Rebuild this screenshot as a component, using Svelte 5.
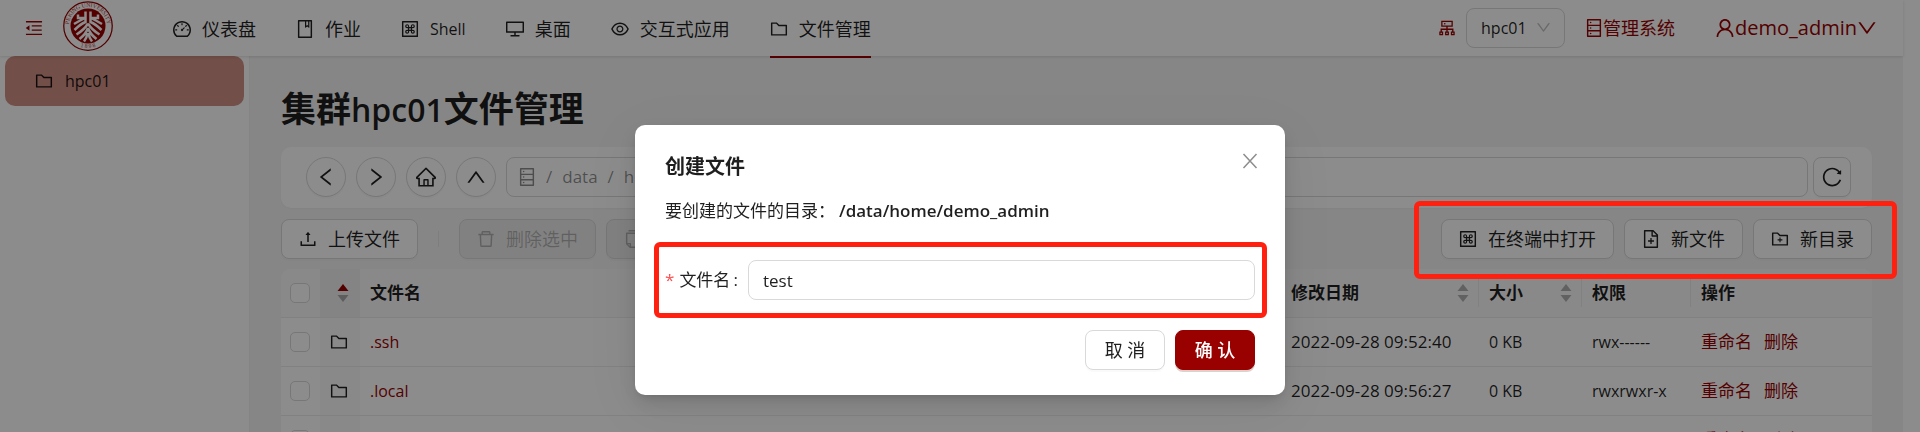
<script>
  const paths = {
    menuFold: 'M408 442h480c4.4 0 8-3.6 8-8v-56c0-4.4-3.6-8-8-8H408c-4.4 0-8 3.6-8 8v56c0 4.4 3.6 8 8 8zm-8 204c0 4.4 3.6 8 8 8h480c4.4 0 8-3.6 8-8v-56c0-4.4-3.6-8-8-8H408c-4.4 0-8 3.6-8 8v56zm504-486H120c-4.4 0-8 3.6-8 8v56c0 4.4 3.6 8 8 8h784c4.4 0 8-3.6 8-8v-56c0-4.4-3.6-8-8-8zm0 632H120c-4.4 0-8 3.6-8 8v56c0 4.4 3.6 8 8 8h784c4.4 0 8-3.6 8-8v-56c0-4.4-3.6-8-8-8zM115.4 518.9L271.7 642c5.8 4.6 14.4.5 14.4-6.9V388.9c0-7.4-8.5-11.5-14.4-6.9L115.4 505.1a8.74 8.74 0 000 13.8z',
    dashboard: 'M924.8 385.6a446.7 446.7 0 00-96-142.4 446.7 446.7 0 00-142.4-96C631.1 123.8 572.5 112 512 112s-119.1 11.8-174.4 35.2a446.7 446.7 0 00-142.4 96 446.7 446.7 0 00-96 142.4C75.8 440.9 64 499.5 64 560c0 132.7 58.3 257.7 159.9 343.1l1.7 1.4c5.8 4.8 13.1 7.5 20.6 7.5h531.7c7.5 0 14.8-2.7 20.6-7.5l1.7-1.4C901.7 817.7 960 692.7 960 560c0-60.5-11.9-119.1-35.2-174.4zM761.4 836H262.6A371.12 371.12 0 01140 560c0-99.4 38.7-192.8 109-263 70.3-70.3 163.7-109 263-109 99.4 0 192.8 38.7 263 109 70.3 70.3 109 163.7 109 263 0 105.6-44.5 205.5-122.6 276zM623.5 421.5a8.03 8.03 0 00-11.3 0L527.7 506c-18.7-5-39.4-.2-54.1 14.5a55.95 55.95 0 000 79.2 55.95 55.95 0 0079.2 0 55.87 55.87 0 0014.5-54.1l84.5-84.5c3.1-3.1 3.1-8.2 0-11.3l-28.3-28.3zM490 320h44c4.4 0 8-3.6 8-8v-80c0-4.4-3.6-8-8-8h-44c-4.4 0-8 3.6-8 8v80c0 4.4 3.6 8 8 8zm260 218v44c0 4.4 3.6 8 8 8h80c4.4 0 8-3.6 8-8v-44c0-4.4-3.6-8-8-8h-80c-4.4 0-8 3.6-8 8zm12.7-197.2l-31.1-31.1a8.03 8.03 0 00-11.3 0l-56.6 56.6a8.03 8.03 0 000 11.3l31.1 31.1c3.1 3.1 8.2 3.1 11.3 0l56.6-56.6c3.1-3.1 3.1-8.2 0-11.3zm-458.6-31.1a8.03 8.03 0 00-11.3 0l-31.1 31.1a8.03 8.03 0 000 11.3l56.6 56.6c3.1 3.1 8.2 3.1 11.3 0l31.1-31.1c3.1-3.1 3.1-8.2 0-11.3l-56.6-56.6zM262 530h-80c-4.4 0-8 3.6-8 8v44c0 4.4 3.6 8 8 8h80c4.4 0 8-3.6 8-8v-44c0-4.4-3.6-8-8-8z',
    book: 'M832 64H192c-17.7 0-32 14.3-32 32v832c0 17.7 14.3 32 32 32h640c17.7 0 32-14.3 32-32V96c0-17.7-14.3-32-32-32zm-260 72h96v209.9L621.5 312 572 347.4V136zm220 752H232V136h280v296.9c0 3.3 1 6.6 3 9.3a15.9 15.9 0 0022.3 3.7l83.8-59.9 81.4 59.4c2.7 2 6 3.1 9.4 3.1 8.8 0 16-7.2 16-16V136h64v752z',
    command: 'M880 112H144c-17.7 0-32 14.3-32 32v736c0 17.7 14.3 32 32 32h736c17.7 0 32-14.3 32-32V144c0-17.7-14.3-32-32-32zm-40 728H184V184h656v656zM370.8 554.4c-54.6 0-98.8 44.2-98.8 98.8s44.2 98.8 98.8 98.8 98.8-44.2 98.8-98.8v-42.4h84.7v42.4c0 54.6 44.2 98.8 98.8 98.8s98.8-44.2 98.8-98.8-44.2-98.8-98.8-98.8h-42.4v-84.7h42.4c54.6 0 98.8-44.2 98.8-98.8 0-54.6-44.2-98.8-98.8-98.8s-98.8 44.2-98.8 98.8v42.4h-84.7v-42.4c0-54.6-44.2-98.8-98.8-98.8S272 316.2 272 370.8s44.2 98.8 98.8 98.8h42.4v84.7h-42.4zm42.4 98.8c0 23.4-19 42.4-42.4 42.4s-42.4-19-42.4-42.4 19-42.4 42.4-42.4h42.4v42.4zm197.6-282.4c0-23.4 19-42.4 42.4-42.4s42.4 19 42.4 42.4-19 42.4-42.4 42.4h-42.4v-42.4zm0 240h42.4c23.4 0 42.4 19 42.4 42.4s-19 42.4-42.4 42.4-42.4-19-42.4-42.4v-42.4zM469.6 469.6h84.7v84.7h-84.7v-84.7zm-98.8-56.4c-23.4 0-42.4-19-42.4-42.4s19-42.4 42.4-42.4 42.4 19 42.4 42.4v42.4h-42.4z',
    desktop: 'M928 140H96c-17.7 0-32 14.3-32 32v496c0 17.7 14.3 32 32 32h380v112H304c-8.8 0-16 7.2-16 16v48c0 4.4 3.6 8 8 8h432c4.4 0 8-3.6 8-8v-48c0-8.8-7.2-16-16-16H548V700h380c17.7 0 32-14.3 32-32V172c0-17.7-14.3-32-32-32zm-40 488H136V212h752v416z',
    eye: 'M942.2 486.2C847.4 286.5 704.1 186 512 186c-192.2 0-335.4 100.5-430.2 300.3a60.3 60.3 0 000 51.5C176.6 737.5 319.9 838 512 838c192.2 0 335.4-100.5 430.2-300.3 7.7-16.2 7.7-35 0-51.5zM512 766c-161.3 0-279.4-81.8-362.7-254C232.6 339.8 350.7 258 512 258c161.3 0 279.4 81.8 362.7 254C791.5 684.2 673.4 766 512 766zm-4-430c-97.2 0-176 78.8-176 176s78.8 176 176 176 176-78.8 176-176-78.8-176-176-176zm0 288c-61.9 0-112-50.1-112-112s50.1-112 112-112 112 50.1 112 112-50.1 112-112 112z',
    folder: 'M880 298.4H521L403.7 186.2a8.15 8.15 0 00-5.5-2.2H144c-17.7 0-32 14.3-32 32v592c0 17.7 14.3 32 32 32h736c17.7 0 32-14.3 32-32V330.4c0-17.7-14.3-32-32-32zM840 768H184V256h188.5l119.6 114.4H840V768z',
    folderAdd: 'M880 298.4H521L403.7 186.2a8.15 8.15 0 00-5.5-2.2H144c-17.7 0-32 14.3-32 32v592c0 17.7 14.3 32 32 32h736c17.7 0 32-14.3 32-32V330.4c0-17.7-14.3-32-32-32zM840 768H184V256h188.5l119.6 114.4H840V768zM484 443.1V528h-84.5c-4.1 0-7.5 3.1-7.5 7v42c0 3.8 3.4 7 7.5 7H484v84.9c0 3.9 3.2 7.1 7 7.1h42c3.9 0 7-3.2 7-7.1V584h84.5c4.1 0 7.5-3.2 7.5-7v-42c0-3.9-3.4-7-7.5-7H540v-84.9c0-3.9-3.1-7.1-7-7.1h-42c-3.8 0-7 3.2-7 7.1z',
    fileAdd: 'M854.6 288.6L639.4 73.4c-6-6-14.1-9.4-22.6-9.4H192c-17.7 0-32 14.3-32 32v832c0 17.7 14.3 32 32 32h640c17.7 0 32-14.3 32-32V311.3c0-8.5-3.4-16.7-9.4-22.7zM790.2 326H602V137.8L790.2 326zm1.8 562H232V136h302v216a42 42 0 0042 42h216v494zM544 472c0-4.4-3.6-8-8-8h-48c-4.4 0-8 3.6-8 8v108H372c-4.4 0-8 3.6-8 8v48c0 4.4 3.6 8 8 8h108v108c0 4.4 3.6 8 8 8h48c4.4 0 8-3.6 8-8V644h108c4.4 0 8-3.6 8-8v-48c0-4.4-3.6-8-8-8H544V472z',
    upload: 'M400 317.7h73.9V656c0 4.4 3.6 8 8 8h60c4.4 0 8-3.6 8-8V317.7H624c6.7 0 10.4-7.7 6.3-12.9L518.3 163a8 8 0 00-12.6 0l-112 141.7c-4.1 5.3-.4 13 6.3 13zM878 626h-60c-4.4 0-8 3.6-8 8v154H214V634c0-4.4-3.6-8-8-8h-60c-4.4 0-8 3.6-8 8v198c0 17.7 14.3 32 32 32h684c17.7 0 32-14.3 32-32V634c0-4.4-3.6-8-8-8z',
    trash: 'M360 184h-8c4.4 0 8-3.6 8-8v8h304v-8c0 4.4 3.6 8 8 8h-8v72h72v-80c0-35.3-28.7-64-64-64H352c-35.3 0-64 28.7-64 64v80h72v-72zm504 72H160c-17.7 0-32 14.3-32 32v32c0 4.4 3.6 8 8 8h60.4l24.7 523c1.6 34.1 29.8 61 63.9 61h454c34.2 0 62.3-26.8 63.9-61l24.7-523H888c4.4 0 8-3.6 8-8v-32c0-17.7-14.3-32-32-32zM731.3 840H292.7l-24.2-512h487l-24.2 512z',
    copy: 'M832 64H296c-4.4 0-8 3.6-8 8v56c0 4.4 3.6 8 8 8h496v688c0 4.4 3.6 8 8 8h56c4.4 0 8-3.6 8-8V96c0-17.7-14.3-32-32-32zM704 192H192c-17.7 0-32 14.3-32 32v530.7c0 8.5 3.4 16.6 9.4 22.6l173.3 173.3c2.2 2.2 4.7 4 7.4 5.5v1.9h4.2c3.5 1.3 7.2 2 11 2H704c17.7 0 32-14.3 32-32V224c0-17.7-14.3-32-32-32zM350 856.2L263.9 770H350v86.2zM664 888H414V746c0-22.1-17.9-40-40-40H232V264h432v624z',
    left: 'M724 218.3V141c0-6.7-7.7-10.4-12.9-6.3L260.3 486.8a31.86 31.86 0 000 50.3l450.8 352.1c5.3 4.1 12.9.4 12.9-6.3v-77.3c0-4.9-2.3-9.6-6.1-12.6l-360-281 360-281.1c3.8-3 6.1-7.7 6.1-12.6z',
    right: 'M765.7 486.8L314.9 134.7A7.97 7.97 0 00302 141v77.3c0 4.9 2.3 9.6 6.1 12.6l360 281.1-360 281.1c-3.9 3-6.1 7.7-6.1 12.6V883c0 6.7 7.7 10.4 12.9 6.3l450.8-352.1a31.96 31.96 0 000-50.4z',
    up: 'M890.5 755.3L537.9 269.2c-12.8-17.6-39-17.6-51.7 0L133.5 755.3A8 8 0 00140 768h75c5.1 0 9.9-2.5 12.9-6.6L512 369.8l284.1 391.6c3 4.1 7.8 6.6 12.9 6.6h75c6.5 0 10.3-7.4 6.5-12.7z',
    down: 'M884 256h-75c-5.1 0-9.9 2.5-12.9 6.6L512 654.2 227.9 262.6c-3-4.1-7.8-6.6-12.9-6.6h-75c-6.5 0-10.3 7.4-6.5 12.7l352.6 486.1c12.8 17.6 39 17.6 51.7 0l352.6-486.1c3.9-5.3.1-12.7-6.4-12.7z',
    home: 'M946.5 505L560.1 118.8l-25.9-25.9a31.5 31.5 0 00-44.4 0L77.5 505a63.9 63.9 0 00-18.8 46c.4 35.2 29.7 63.3 64.9 63.3h42.5V940h691.8V614.3h43.4c17.1 0 33.2-6.7 45.3-18.8a63.6 63.6 0 0018.7-45.3c0-17-6.7-33.1-18.8-45.2zM568 868H456V664h112v204zm217.9-325.7V868H632V640c0-22.1-17.9-40-40-40H432c-22.1 0-40 17.9-40 40v228H238.1V542.3h-96l370-369.7 23.1 23.1L882 542.3h-96.1z',
    database: 'M832 64H192c-17.7 0-32 14.3-32 32v832c0 17.7 14.3 32 32 32h640c17.7 0 32-14.3 32-32V96c0-17.7-14.3-32-32-32zm-600 72h560v208H232V136zm560 480H232V408h560v208zm0 272H232V680h560v208zM304 240a40 40 0 1080 0 40 40 0 10-80 0zm0 272a40 40 0 1080 0 40 40 0 10-80 0zm0 272a40 40 0 1080 0 40 40 0 10-80 0z',
    reload: 'M909.1 209.3l-56.4 44.1C775.8 155.1 656.2 92 521.9 92 290 92 102.3 279.5 102 511.5 101.7 743.7 289.8 932 521.9 932c181.3 0 335.8-115 394.6-276.1 1.5-4.2-.7-8.9-4.9-10.3l-56.7-19.5a8 8 0 00-10.1 4.8c-1.8 5-3.8 10-5.9 14.9-17.3 41-42.1 77.8-73.7 109.4A344.77 344.77 0 01655.9 829c-42.3 17.9-87.4 27-133.8 27-46.5 0-91.5-9.1-133.8-27A341.5 341.5 0 01279 755.2a342.16 342.16 0 01-73.7-109.4c-17.9-42.4-27-87.4-27-133.9s9.1-91.5 27-133.9c17.3-41 42.1-77.8 73.7-109.4 31.6-31.6 68.4-56.4 109.3-73.8 42.3-17.9 87.4-27 133.8-27 46.5 0 91.5 9.1 133.8 27a341.5 341.5 0 01109.3 73.8c9.9 9.9 19.2 20.4 27.8 31.4l-60.2 47a8 8 0 003 14.1l175.6 43c5 1.2 9.9-2.6 9.9-7.7l.8-180.9c-.1-6.6-7.8-10.3-13-6.2z',
    user: 'M858.5 763.6a374 374 0 00-80.6-119.5 375.63 375.63 0 00-119.5-80.6c-.4-.2-.8-.3-1.2-.5C719.5 518 760 444.7 760 362c0-137-111-248-248-248S264 225 264 362c0 82.7 40.5 156 102.8 201.1-.4.2-.8.3-1.2.5-44.8 18.9-85 46-119.5 80.6a375.63 375.63 0 00-80.6 119.5A371.7 371.7 0 00136 901.8a8 8 0 008 8.2h60c4.4 0 7.9-3.5 8-7.8 2-77.2 33-149.5 87.8-204.3 56.7-56.7 132-87.9 212.2-87.9s155.5 31.2 212.2 87.9C779 752.7 810 825 812 902.2c.1 4.4 3.6 7.8 8 7.8h60a8 8 0 008-8.2c-1-47.8-10.9-94.3-29.5-138.2zM512 534c-45.9 0-89.1-17.9-121.6-50.4S340 407.9 340 362c0-45.9 17.9-89.1 50.4-121.6S466.1 190 512 190s89.1 17.9 121.6 50.4S684 316.1 684 362c0 45.9-17.9 89.1-50.4 121.6S557.9 534 512 534z',
    cluster: 'M888 680h-54V540H546v-92h238c8.8 0 16-7.2 16-16V168c0-8.8-7.2-16-16-16H240c-8.8 0-16 7.2-16 16v264c0 8.8 7.2 16 16 16h238v92H190v140h-54c-4.4 0-8 3.6-8 8v176c0 4.4 3.6 8 8 8h176c4.4 0 8-3.6 8-8V688c0-4.4-3.6-8-8-8h-54v-72h220v72h-54c-4.4 0-8 3.6-8 8v176c0 4.4 3.6 8 8 8h176c4.4 0 8-3.6 8-8V688c0-4.4-3.6-8-8-8h-54v-72h220v72h-54c-4.4 0-8 3.6-8 8v176c0 4.4 3.6 8 8 8h176c4.4 0 8-3.6 8-8V688c0-4.4-3.6-8-8-8zM256 805.3c0 1.5-1.2 2.7-2.7 2.7h-58.7c-1.5 0-2.7-1.2-2.7-2.7v-58.7c0-1.5 1.2-2.7 2.7-2.7h58.7c1.5 0 2.7 1.2 2.7 2.7v58.7zm288 0c0 1.5-1.2 2.7-2.7 2.7h-58.7c-1.5 0-2.7-1.2-2.7-2.7v-58.7c0-1.5 1.2-2.7 2.7-2.7h58.7c1.5 0 2.7 1.2 2.7 2.7v58.7zM288 384V216h448v168H288zm544 421.3c0 1.5-1.2 2.7-2.7 2.7h-58.7c-1.5 0-2.7-1.2-2.7-2.7v-58.7c0-1.5 1.2-2.7 2.7-2.7h58.7c1.5 0 2.7 1.2 2.7 2.7v58.7zM360 300a40 40 0 1080 0 40 40 0 10-80 0z',
  };

  const nav = [
    { icon: 'dashboard', label: '仪表盘' },
    { icon: 'book', label: '作业' },
    { icon: 'command', label: 'Shell', latin: true },
    { icon: 'desktop', label: '桌面' },
    { icon: 'eye', label: '交互式应用' },
    { icon: 'folder', label: '文件管理', active: true },
  ];

  const crumbs = ['data', 'home'];

  const files = [
    { name: '.ssh', date: '2022-09-28 09:52:40', size: '0 KB', mode: 'rwx------' },
    { name: '.local', date: '2022-09-28 09:56:27', size: '0 KB', mode: 'rwxrwxr-x' },
    { name: '.config', date: '2022-09-28 09:56:27', size: '0 KB', mode: 'rwxrwxr-x' },
  ];

  let fileName = $state('test');
</script>

{#snippet icon(name, size = '')}
  <svg class="icon {size}" viewBox="64 64 896 896" aria-hidden="true"><path d={paths[name]} fill-rule="evenodd" /></svg>
{/snippet}

{#snippet sorter(up = false)}
  <svg class="sorter" viewBox="0 0 12 20" aria-hidden="true">
    <path class:on={up} d="M6 1L11.5 8H.5z" />
    <path d="M.5 12h11L6 19z" />
  </svg>
{/snippet}

<div class="page">
  <header>
    <button class="bare fold" aria-label="菜单">{@render icon('menuFold')}</button>
    <svg class="logo" viewBox="0 0 100 100" role="img" aria-label="Peking University">
      <defs>
        <path id="ring-top" d="M21.5 76A38.5 38.5 0 1 1 78.5 76" />
        <path id="ring-bottom" d="M26 87A44.5 44.5 0 0 0 74 87" />
      </defs>
      <circle cx="50" cy="50" r="48.5" fill="#fff" stroke="#900" stroke-width="2.5" />
      <circle cx="50" cy="50" r="35" fill="#900" />
      <g fill="#b03030" font-family="Liberation Serif, serif" font-size="11.5">
        <text><textPath href="#ring-top" startOffset="50%" text-anchor="middle">PEKING UNIVERSITY</textPath></text>
        <text><textPath href="#ring-bottom" startOffset="50%" text-anchor="middle">1 8 9 8</textPath></text>
      </g>
      <g fill="none" stroke="#fff" stroke-width="5">
        <path d="M45 21v21Q35 46 23 58M30 27v7H44M44 34Q34 39 22 46" />
        <path d="M55 21v21Q65 46 77 58M70 27v7H56M56 34Q66 39 78 46" />
        <path d="M50 45Q43 57 27 67M50 45Q57 57 73 67M50 54Q46 66 33 76M50 54Q54 66 67 76M49 64Q48 73 42 81M51 64Q52 73 58 81" />
      </g>
    </svg>
    <nav>
      {#each nav as item}
        <a href="#top" class:active={item.active}>{@render icon(item.icon)}<span class:latin={item.latin}>{item.label}</span></a>
      {/each}
    </nav>
    <div class="tools">
      <span class="red tool-icon">{@render icon('cluster')}</span>
      <div class="select">
        <select aria-label="集群"><option>hpc01</option></select>
        {@render icon('down', 'small')}
      </div>
      <a class="red admin" href="#top">{@render icon('database')}管理系统</a>
      <button class="bare red user">{@render icon('user', 'large')}<span>demo_admin</span>{@render icon('down', 'large')}</button>
    </div>
  </header>

  <div class="body">
    <aside><a href="#top">{@render icon('folder')}<span>hpc01</span></a></aside>
    <main>
      <h1>集群<span>hpc01</span>文件管理</h1>
      <div class="pathbar">
        <button class="round" aria-label="后退">{@render icon('left', 'large')}</button>
        <button class="round" aria-label="前进">{@render icon('right', 'large')}</button>
        <button class="round" aria-label="主目录">{@render icon('home', 'large')}</button>
        <button class="round" aria-label="上级">{@render icon('up', 'large')}</button>
        <div class="crumbs">
          {@render icon('database')}
          {#each crumbs as crumb}<span>/</span><span>{crumb}</span>{/each}
        </div>
        <button class="reload" aria-label="刷新">{@render icon('reload', 'large')}</button>
      </div>

      <div class="toolbar">
        <button class="btn">{@render icon('upload')}上传文件</button>
        <span class="divider"></span>
        <button class="btn" disabled>{@render icon('trash')}删除选中</button>
        <button class="btn" disabled>{@render icon('copy')}复制选中</button>
        <div class="marked">
          <button class="btn">{@render icon('command')}在终端中打开</button>
          <button class="btn">{@render icon('fileAdd')}新文件</button>
          <button class="btn">{@render icon('folderAdd')}新目录</button>
        </div>
      </div>

      <table>
        <colgroup><col class="c-check" /><col class="c-type" /><col /><col class="c-date" /><col class="c-size" /><col class="c-mode" /><col class="c-action" /></colgroup>
        <thead>
          <tr>
            <th class="check"><input type="checkbox" aria-label="全选" /></th>
            <th class="type">{@render sorter(true)}</th>
            <th>文件名</th>
            <th class="sep"><div class="head">修改日期{@render sorter()}</div></th>
            <th class="sep"><div class="head">大小{@render sorter()}</div></th>
            <th class="sep">权限</th>
            <th>操作</th>
          </tr>
        </thead>
        <tbody>
          {#each files as file}
            <tr>
              <td class="check"><input type="checkbox" aria-label={file.name} /></td>
              <td class="type">{@render icon('folder')}</td>
              <td><a href="#top">{file.name}</a></td>
              <td class="date">{file.date}</td>
              <td>{file.size}</td>
              <td>{file.mode}</td>
              <td class="actions"><a href="#top">重命名</a><a href="#top">删除</a></td>
            </tr>
          {/each}
        </tbody>
      </table>
    </main>
  </div>
</div>

<div class="mask">
  <div class="modal" role="dialog" aria-modal="true" aria-labelledby="modal-title">
    <div class="modal-head">
      <h2 id="modal-title">创建文件</h2>
      <button class="bare close" aria-label="关闭">
        <svg viewBox="0 0 16 16" aria-hidden="true"><path d="M1.5 1L14.5 15M14.5 1L1.5 15" /></svg>
      </button>
    </div>
    <p><span>要创建的文件的目录：</span><strong>/data/home/demo_admin</strong></p>
    <div class="field">
      <label for="file-name"><span class="star">*</span>文件名<span class="colon">:</span></label>
      <input id="file-name" type="text" bind:value={fileName} />
    </div>
    <div class="modal-foot">
      <button class="btn">取 消</button>
      <button class="btn primary">确 认</button>
    </div>
  </div>
</div>

<style>
  :global(html), :global(body) { height: 100%; overflow: hidden; }
  :global(body) {
    margin: 0;
    font-family: "Open Sans", "Noto Sans CJK SC", sans-serif;
    font-size: 17px;
    line-height: 28px;
    color: rgba(0, 0, 0, 0.88);
  }
  :global(#app) { height: 100%; }
  * { box-sizing: border-box; }
  button, input, select { font: inherit; color: inherit; margin: 0; }
  a { color: inherit; text-decoration: none; }
  .icon { width: 18px; height: 18px; flex: none; fill: currentColor; }
  .icon.small { width: 15px; height: 15px; }
  .icon.large { width: 20px; height: 20px; }
  .bare { border: 0; background: none; padding: 0; display: flex; align-items: center; }
  .red { color: #900; }

  .page { height: 100%; overflow: hidden; padding-right: 17px; background: #fff; }
  header {
    position: relative;
    z-index: 1;
    display: flex;
    height: 56px;
    padding: 0 26px 0 25px;
    background: #fff;
    box-shadow: 0 1px 3px rgba(0, 0, 0, 0.12);
  }
  .fold { color: #900; }
  .logo { width: 50px; height: 50px; margin: 1px 60px 0 20px; flex: none; }
  nav { display: flex; gap: 40px; font-size: 18px; }
  nav a { display: flex; align-items: center; gap: 11px; height: 58px; padding-top: 2px; border-bottom: 2px solid transparent; }
  nav a.active { border-bottom-color: #900; }
  .latin { font-size: 16px; }
  .tools { margin-left: auto; display: flex; align-items: center; }
  .tool-icon { display: flex; margin-right: 10px; }
  .select { position: relative; width: 99px; margin-right: 20px; }
  .select select {
    appearance: none;
    width: 100%;
    height: 40px;
    padding: 0 14px;
    border: 1px solid #d9d9d9;
    border-radius: 8px;
    background: #fff;
    font-size: 16px;
  }
  .select .icon { position: absolute; right: 14px; top: 12px; color: rgba(0, 0, 0, 0.25); }
  .admin { display: flex; align-items: center; font-size: 18px; margin-right: 40px; }
  .user { font-size: 20px; }

  .body { display: grid; grid-template-columns: 250px 1fr; min-height: calc(100% - 56px); }
  aside { padding: 0 5px; border-right: 1px solid #f0f0f0; }
  aside a {
    display: flex;
    align-items: center;
    gap: 12px;
    height: 50px;
    padding: 0 30px;
    border-radius: 10px;
    background: #d09084;
    font-size: 16px;
  }
  main { padding: 0 31px; background: #f5f5f5; min-width: 0; }
  h1 { margin: 0; padding: 29px 0 13px; font-size: 35px; line-height: 48px; font-weight: 700; }
  h1 span { font-weight: 600; font-size: 32px; }
  .pathbar {
    display: flex;
    gap: 10px;
    padding: 10px 21px 11px 25px;
    border-radius: 10px;
    background: #fff;
    box-shadow: 0 1px 2px rgba(0, 0, 0, 0.04);
  }
  .round, .reload, .btn {
    display: flex;
    align-items: center;
    justify-content: center;
    height: 40px;
    padding: 0;
    border: 1px solid #d9d9d9;
    background: #fff;
    box-shadow: 0 2px 0 rgba(0, 0, 0, 0.02);
  }
  .round { width: 40px; border-radius: 50%; flex: none; }
  .reload { width: 38px; border-radius: 8px; margin-left: -5px; flex: none; }
  .crumbs {
    flex: 1;
    min-width: 0;
    display: flex;
    align-items: center;
    gap: 10px;
    padding: 0 11px;
    border: 1px solid #d9d9d9;
    border-radius: 8px;
    color: rgba(0, 0, 0, 0.45);
  }
  .toolbar { display: flex; align-items: center; gap: 10px; padding: 11px 0 10px; }
  .btn { gap: 11px; padding: 0 17px; border-radius: 8px; font-size: 18px; white-space: nowrap; }
  .btn:disabled { background: rgba(0, 0, 0, 0.04); color: rgba(0, 0, 0, 0.25); }
  .divider { width: 1px; height: 16px; margin: 0 10px; background: rgba(0, 0, 0, 0.06); }
  .marked { display: flex; gap: 10px; margin-left: auto; position: relative; }
  .marked::after {
    content: "";
    position: absolute;
    inset: -18px -25px -20px -27px;
    border: 5px solid #ff2010;
    border-radius: 6px;
    z-index: 3;
    pointer-events: none;
  }
  table { width: 100%; table-layout: fixed; border-collapse: separate; border-spacing: 0; background: #fff; border-radius: 10px 10px 0 0; }
  .c-check { width: 39px; }
  .c-type { width: 40px; }
  .c-date { width: 198px; }
  .c-size { width: 103px; }
  .c-mode { width: 109px; }
  .c-action { width: 181px; }
  th, td { padding: 10px; text-align: left; border-bottom: 1px solid #ececec; white-space: nowrap; font-size: 16px; height: 49px; }
  th { background: #fafafa; font-size: 17px; font-weight: 700; height: 48px; position: relative; }
  th:first-child { border-top-left-radius: 10px; }
  th:last-child { border-top-right-radius: 10px; }
  td.date { font-size: 17px; }
  td a { color: #900; }
  .sep::after { content: ""; position: absolute; right: 0; top: 10px; width: 1px; height: 28px; background: #ececec; }
  .head { display: flex; justify-content: space-between; align-items: center; }
  .sorter { width: 12px; height: 20px; fill: rgba(0, 0, 0, 0.29); flex: none; }
  .sorter .on { fill: #900; }
  .check input {
    appearance: none;
    display: block;
    width: 20px;
    height: 20px;
    border: 1px solid #d9d9d9;
    border-radius: 5px;
    background: #fff;
  }
  th.check, td.check { padding: 0 9px; }
  .type svg { display: block; }
  th.type { background: #f0f0f0; }
  th.type svg { margin-left: 7px; }
  td.type { background: #fafafa; }
  td.actions { font-size: 17px; }
  .actions a + a { margin-left: 12px; }

  .mask {
    position: fixed;
    inset: 0;
    z-index: 2;
    display: flex;
    align-items: flex-start;
    justify-content: center;
    padding-top: 125px;
    background: rgba(0, 0, 0, 0.45);
  }
  .modal {
    width: 650px;
    padding: 25px 30px;
    border-radius: 10px;
    background: #fff;
    box-shadow: 0 8px 20px rgba(0, 0, 0, 0.12), 0 4px 8px -4px rgba(0, 0, 0, 0.16), 0 12px 60px 10px rgba(0, 0, 0, 0.06);
  }
  .modal-head { display: flex; justify-content: space-between; align-items: flex-start; }
  h2 { margin: 0; font-size: 20px; line-height: 34px; }
  .close { width: 20px; height: 22px; margin-right: -5px; justify-content: center; }
  .close svg { width: 16px; height: 16px; fill: none; stroke: rgba(0, 0, 0, 0.45); stroke-width: 1.5; }
  .modal p { display: flex; gap: 4px; margin: 13px 0 17px; }
  .modal strong { font-weight: 600; }
  .field {
    display: flex;
    align-items: center;
    margin: 0 -12px 0 -11px;
    padding: 13px 7px 13px 6px;
    border: 5px solid #ff2010;
    border-radius: 6px;
  }
  .field label { display: flex; align-items: center; width: 83px; flex: none; }
  .star { color: #ff4d4f; margin-right: 5px; }
  .colon { margin-left: 3px; }
  .field input {
    flex: 1;
    min-width: 0;
    height: 40px;
    padding: 0 14px;
    border: 1px solid #d9d9d9;
    border-radius: 8px;
    outline: 0;
  }
  .modal-foot { display: flex; justify-content: flex-end; gap: 10px; margin-top: 12px; }
  .modal-foot .btn { width: 80px; }
  .btn.primary { background: #900; border-color: #900; color: #fff; font-weight: 500; box-shadow: 0 2px 0 rgba(100, 20, 0, 0.2); }
</style>
